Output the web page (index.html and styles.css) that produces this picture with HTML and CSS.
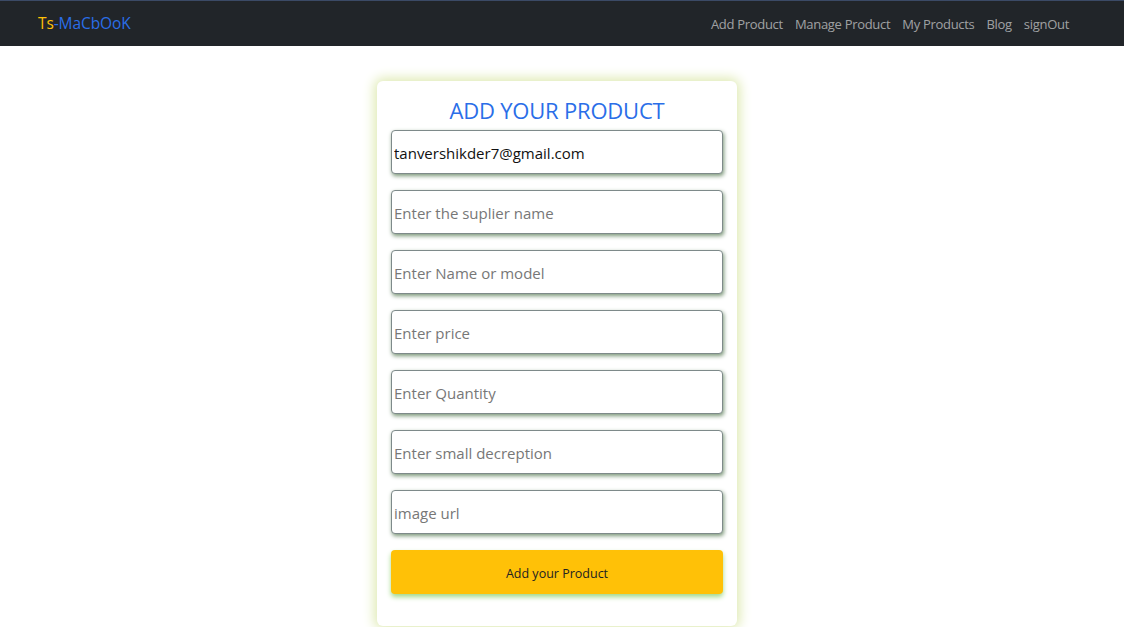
FILE: index.html
```html
<!DOCTYPE html>
<html>
<head>
<meta charset="utf-8">
<link rel="stylesheet" href="styles.css">
</head>
<body>
<nav class="navbar">
  <a class="brand" href="#"><span class="brand-ts">Ts</span><span class="brand-rest">-MaCbOoK</span></a>
  <ul class="nav-links">
    <li><a href="#">Add Product</a></li>
    <li><a href="#">Manage Product</a></li>
    <li><a href="#">My Products</a></li>
    <li><a href="#">Blog</a></li>
    <li><a href="#">signOut</a></li>
  </ul>
</nav>
<main class="page">
  <form class="card">
    <h2 class="title">ADD YOUR PRODUCT</h2>
    <input class="field" type="text" value="tanvershikder7@gmail.com">
    <input class="field" type="text" placeholder="Enter the suplier name">
    <input class="field" type="text" placeholder="Enter Name or model">
    <input class="field" type="text" placeholder="Enter price">
    <input class="field" type="text" placeholder="Enter Quantity">
    <input class="field" type="text" placeholder="Enter small decreption">
    <input class="field" type="text" placeholder="image url">
    <button class="submit" type="button">Add your Product</button>
  </form>
</main>
</body>
</html>
```
FILE: styles.css
```css
* { box-sizing: border-box; }
html, body { margin: 0; padding: 0; background: #fff; overflow: hidden; }
body { font-family: "Open Sans", "Noto Sans", sans-serif; height: 627px; }

.navbar {
  height: 46px;
  background: #212529;
  border-top: 1px solid #3b4a66;
  display: flex;
  align-items: center;
  justify-content: space-between;
  padding: 0 49px 2px 38px;
}
.brand { text-decoration: none; font-size: 15.5px; letter-spacing: -0.1px; }
.brand-ts { color: #ffc107; }
.brand-rest { color: #2a6ee8; }
.nav-links { list-style: none; display: flex; margin: 0; padding: 0; gap: 0; }
.nav-links a {
  color: rgba(255,255,255,0.58);
  text-decoration: none;
  font-size: 13px;
  letter-spacing: -0.3px;
  padding: 0 6px;
}

.page {
  display: flex;
  justify-content: center;
  padding: 35px 10px 0 0;
}
.card {
  width: 360px;
  height: 545px;
  background: #fff;
  border-radius: 6px;
  box-shadow: 0 0 12px 3px #dfeab3;
  padding: 14px 14px 0 14px;
  display: flex;
  flex-direction: column;
  gap: 16px;
}
.title {
  margin: 0 0 -11px 0;
  text-align: center;
  color: #2a6ee8;
  font-weight: 400;
  font-size: 22px;
  line-height: 30px;
  letter-spacing: -0.2px;
}
.field {
  height: 44px;
  width: 100%;
  border: 1px solid #7e8a8a;
  border-radius: 4px;
  box-shadow: 1px 2px 4px #7a9677;
  padding: 2px 2px 0 2px;
  font-family: inherit;
  font-size: 15px;
  color: #111;
  outline: none;
}
.field::placeholder { color: #777; }
.submit {
  height: 44px;
  width: 100%;
  border: none;
  border-radius: 4px;
  background: #ffc107;
  box-shadow: 0 3px 5px #a3d98a;
  font-family: inherit;
  font-size: 12.5px;
  padding-top: 3px;
  color: #222;
}
```
